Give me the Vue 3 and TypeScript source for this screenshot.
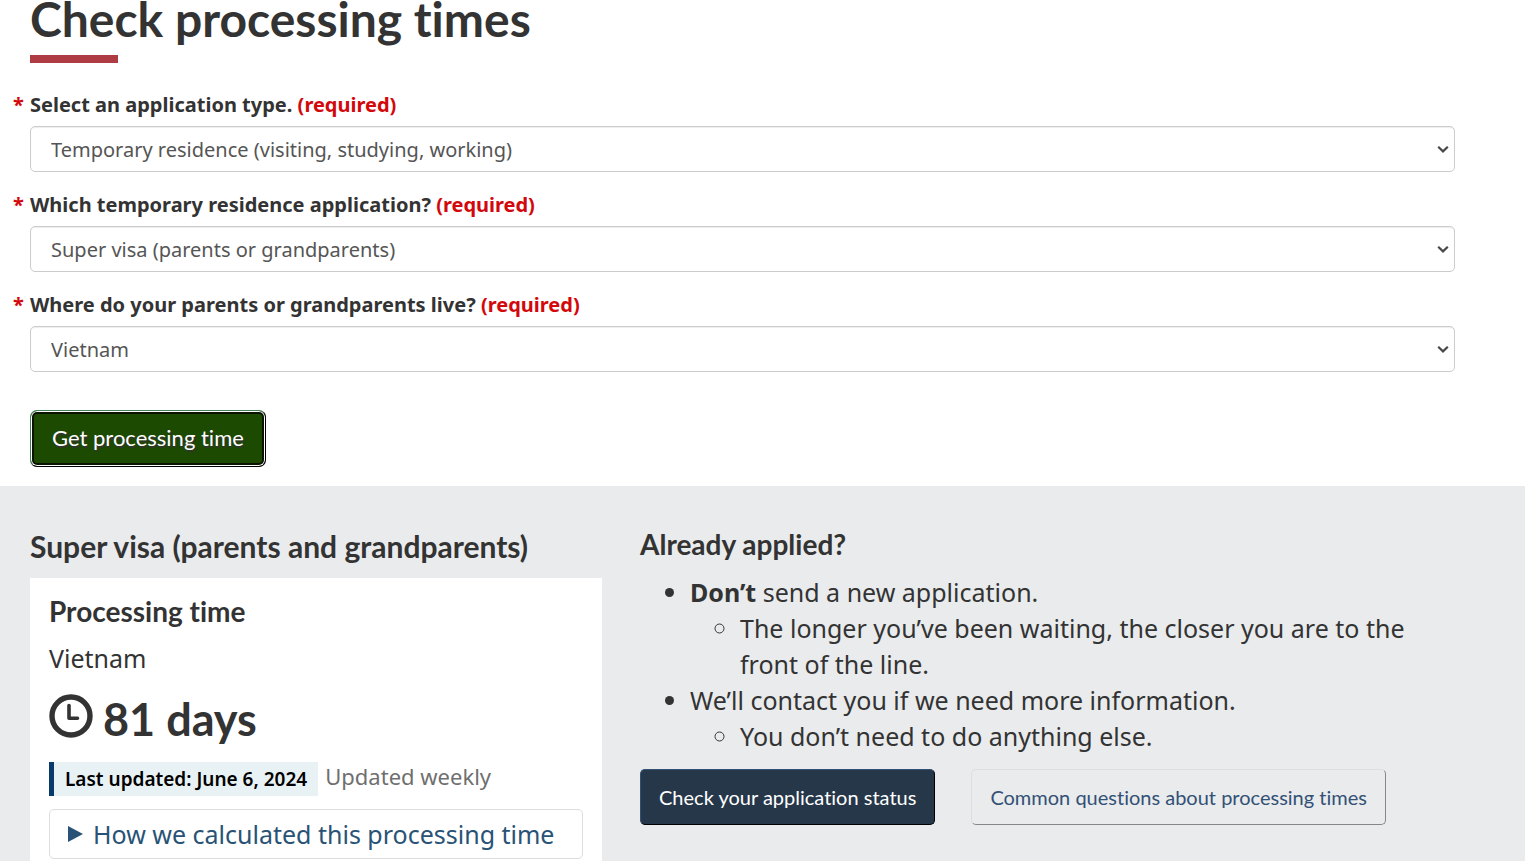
<script setup lang="ts">
import { ref } from 'vue'

interface Field {
  id: string
  label: string
  options: string[]
  value: string
}

const fields = ref<Field[]>([
  {
    id: 'application-type',
    label: 'Select an application type.',
    options: ['Temporary residence (visiting, studying, working)'],
    value: 'Temporary residence (visiting, studying, working)',
  },
  {
    id: 'temporary-type',
    label: 'Which temporary residence application?',
    options: ['Super visa (parents or grandparents)'],
    value: 'Super visa (parents or grandparents)',
  },
  {
    id: 'country',
    label: 'Where do your parents or grandparents live?',
    options: ['Vietnam'],
    value: 'Vietnam',
  },
])
</script>

<template>
  <main class="page">
    <form class="form" @submit.prevent>
      <h1 class="title">Check processing times</h1>
      <div v-for="field in fields" :key="field.id" class="field">
        <label class="label" :for="field.id">
          <span class="star" aria-hidden="true">*</span>{{ field.label }}
          <strong class="required">(required)</strong>
        </label>
        <div class="select-wrap">
          <select :id="field.id" v-model="field.value" class="select">
            <option v-for="option in field.options" :key="option">{{ option }}</option>
          </select>
          <svg class="chevron" viewBox="0 0 12 8" aria-hidden="true">
            <path d="M1.2 1.8 6 6.4l4.8-4.6" fill="none" stroke="#484848" stroke-width="2.2" />
          </svg>
        </div>
      </div>
      <button type="submit" class="submit">Get processing time</button>
    </form>

    <section class="results">
      <div class="result">
        <h2 class="result-title">Super visa (parents and grandparents)</h2>
        <div class="card">
          <h3 class="card-title">Processing time</h3>
          <p class="country">Vietnam</p>
          <p class="time">
            <svg class="clock" viewBox="0 0 44 44" aria-hidden="true">
              <circle cx="22" cy="22" r="19" fill="none" stroke="#333" stroke-width="5.4" />
              <path d="M20 11.5v12.8h8.5" fill="none" stroke="#333" stroke-width="3.6" stroke-linecap="round" stroke-linejoin="round" />
            </svg>
            <span>81 days</span>
          </p>
          <p class="updated">
            <strong class="date">Last updated: June 6, 2024</strong>
            <span class="weekly">Updated weekly</span>
          </p>
          <details class="details">
            <summary class="summary">
              <svg class="marker" viewBox="0 0 15 16" aria-hidden="true">
                <path d="M0 0 15 8 0 16Z" fill="#295376" />
              </svg>
              <span>How we calculated this processing time</span>
            </summary>
          </details>
        </div>
      </div>

      <div class="applied">
        <h2 class="applied-title">Already applied?</h2>
        <ul class="list">
          <li>
            <strong>Don’t</strong> send a new application.
            <ul class="sublist">
              <li>The longer you’ve been waiting, the closer you are to the front of the line.</li>
            </ul>
          </li>
          <li>
            We’ll contact you if we need more information.
            <ul class="sublist">
              <li>You don’t need to do anything else.</li>
            </ul>
          </li>
        </ul>
        <div class="actions">
          <a href="#status" class="link-button primary">Check your application status</a>
          <a href="#questions" class="link-button plain">Common questions about processing times</a>
        </div>
      </div>
    </section>
  </main>
</template>

<style>
body {
  margin: 0;
  background: #fff;
}
</style>

<style scoped>
.page {
  display: flex;
  flex-direction: column;
  min-height: 100vh;
  color: #333;
  font-family: "Noto Sans", sans-serif;
  font-size: 25px;
  line-height: 36px;
  font-variant-ligatures: none;
}
.page *,
.page *::before,
.page *::after {
  box-sizing: border-box;
}
h1,
h2,
h3,
p {
  margin: 0;
}
.title,
.result-title,
.card-title,
.applied-title,
.time {
  font-family: Lato, sans-serif;
  font-weight: 700;
}
.form {
  padding: 0 70px 19px 30px;
}
.title {
  margin-bottom: 28px;
  font-size: 48px;
  line-height: 37px;
}
.title::after {
  content: "";
  display: block;
  width: 88px;
  height: 8px;
  margin-top: 18px;
  background: #af3c43;
}
.field {
  margin-bottom: 19px;
}
.label {
  display: block;
  margin: 0 0 7px -17px;
  font-size: 20px;
  font-weight: 700;
  line-height: 28px;
}
.star {
  display: inline-block;
  width: 17px;
  color: #d3080c;
}
.required {
  color: #d3080c;
  font-weight: 700;
}
.select-wrap {
  display: grid;
  align-items: center;
}
.select,
.chevron {
  grid-area: 1 / 1;
}
.select {
  width: 100%;
  height: 46px;
  padding: 0 30px 0 20px;
  border: 1px solid #ccc;
  border-radius: 5px;
  background: #fff;
  box-shadow: inset 0 1px 1px rgba(0, 0, 0, 0.075);
  color: #555;
  font-family: "Noto Sans", sans-serif;
  font-size: 20px;
  appearance: none;
}
.chevron {
  justify-self: end;
  width: 12px;
  height: 8px;
  margin-right: 6px;
  pointer-events: none;
}
.submit {
  display: block;
  height: 57px;
  margin-top: 38px;
  padding: 0 21px 3px;
  border: 1px solid;
  border-color: #458259 #000 #000 #458259;
  border-radius: 7px;
  background: #1c4a00;
  box-shadow: inset 0 0 0 1px #fff, inset 0 0 0 3px #0b1400;
  color: #fff;
  font-family: Lato, sans-serif;
  font-size: 22px;
  font-variant-ligatures: none;
  text-shadow: 1px 2px 1px #333;
}
.results {
  display: grid;
  flex: 1;
  grid-template-columns: 572fr 815fr;
  gap: 38px;
  padding: 39px 70px 0 30px;
  background: #e9ebed;
}
.result {
  display: flex;
  flex-direction: column;
}
.result-title {
  margin-bottom: 11px;
  font-size: 30px;
  line-height: 42px;
}
.card {
  flex: 1;
  padding: 15px 19px 2px;
  background: #fff;
}
.card-title {
  font-size: 28px;
  line-height: 36px;
}
.country {
  margin-top: 11px;
  font-size: 25px;
  line-height: 36px;
}
.time {
  display: flex;
  align-items: center;
  gap: 10px;
  height: 56px;
  margin-top: 15px;
  font-size: 45px;
  line-height: 56px;
}
.clock {
  width: 44px;
  height: 44px;
  margin-bottom: 7px;
}
.updated {
  display: flex;
  gap: 7px;
  margin: 15px 0 13px;
}
.date {
  padding: 0 11px;
  border-left: 5px solid #083b6b;
  background: #e8f2f4;
  color: #000;
  font-size: 19px;
  font-weight: 600;
  line-height: 34px;
}
.weekly {
  color: #6f6f6f;
  font-size: 22px;
  line-height: 28px;
}
.details {
  border: 1px solid #ddd;
  border-radius: 5px;
}
.summary {
  display: flex;
  align-items: center;
  gap: 10px;
  padding: 6px 18px;
  color: #295376;
  list-style: none;
  cursor: pointer;
}
.marker {
  width: 15px;
  height: 16px;
}
.applied-title {
  font-size: 28px;
  line-height: 38px;
}
.list {
  margin: 11px 0 0;
  padding-left: 50px;
  list-style: disc;
}
.sublist {
  margin: 0;
  padding-left: 50px;
  list-style: circle;
}
.actions {
  display: flex;
  gap: 36px;
  margin-top: 15px;
}
.link-button {
  padding: 13px 18px;
  border: 1px solid;
  border-radius: 5px;
  font-family: Lato, sans-serif;
  font-size: 20px;
  line-height: 28px;
  text-decoration: none;
  white-space: nowrap;
}
.primary {
  border-color: #335075 #000 #000 #335075;
  background: #26374a;
  color: #fff;
}
.plain {
  border-color: #dcdee1 #858789 #858789 #dcdee1;
  color: #335075;
}
</style>
